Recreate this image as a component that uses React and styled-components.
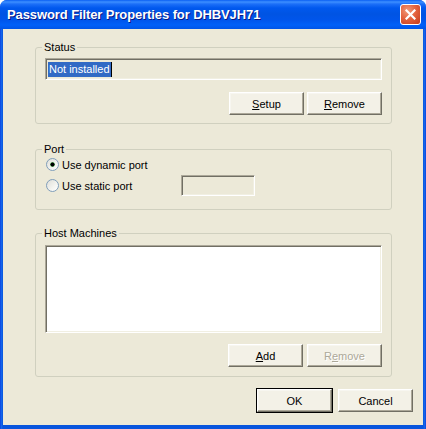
import styled, { createGlobalStyle } from "styled-components";

const GlobalStyle = createGlobalStyle`
  html, body {
    margin: 0;
    padding: 0;
    background: #ffffff;
  }
  body {
    font-family: "Liberation Sans", Arial, sans-serif;
    font-size: 11px;
  }
`;

const Window = styled.div`
  width: 426px;
  height: 429px;
  box-sizing: border-box;
  display: flex;
  flex-direction: column;
  border-radius: 7px 7px 0 0;
  background: linear-gradient(to right, #0831d9 0, #166aee 1px, #0855dd 3px, #0855dd 423px, #166aee 425px, #0831d9 426px);
  overflow: hidden;
`;

const TitleBar = styled.div`
  height: 29px;
  flex-shrink: 0;
  display: flex;
  align-items: center;
  justify-content: space-between;
  padding: 0 5px 0 7px;
  box-sizing: border-box;
  background: linear-gradient(
    to bottom,
    #0a5ff3 0px,
    #3d8fff 2px,
    #1c6ff8 4px,
    #0058ee 8px,
    #0054e3 14px,
    #0055eb 20px,
    #0060f8 25px,
    #0054e6 29px
  );
`;

const Title = styled.span`
  color: #ffffff;
  font-family: "Liberation Sans", Arial, sans-serif;
  font-weight: bold;
  font-size: 13px;
  letter-spacing: -0.1px;
  text-shadow: 1px 1px 0 #0a1883;
`;

const CloseButton = styled.div`
  width: 21px;
  height: 21px;
  box-sizing: border-box;
  border: 1px solid #ffffff;
  border-radius: 3px;
  background: radial-gradient(circle at 35% 30%, #f09a7a 0%, #e4643f 45%, #c4391a 100%);
  display: flex;
  align-items: center;
  justify-content: center;
`;

const Client = styled.div`
  flex: 1;
  margin: 0 3px 4px 3px;
  background: #ece9d8;
  padding: 11px 10px 0 32px;
  display: flex;
  flex-direction: column;
  color: #000000;
`;

const GroupBox = styled.fieldset`
  margin: ${(p) => p.$top || 0}px 21px 0 0;
  padding: ${(p) => p.$pad};
  min-width: 0;
  border: 1px solid #d0d0bf;
  border-radius: 3px;
  display: flex;
  flex-direction: column;
`;

const Legend = styled.legend`
  padding: 0 2px;
  margin-left: -3px;
  line-height: 14px;
  font-size: 11px;
`;

const Sunken = styled.div`
  box-sizing: border-box;
  height: ${(p) => p.$h}px;
  width: ${(p) => (p.$w ? `${p.$w}px` : "auto")};
  background: ${(p) => p.$bg};
  border-top: 1px solid #aca899;
  border-left: 1px solid #aca899;
  border-bottom: 1px solid #ffffff;
  border-right: 1px solid #ffffff;
  box-shadow: inset 1px 1px 0 #716f64, inset -1px -1px 0 #f1efe2;
`;

const StatusField = styled(Sunken)`
  display: flex;
  align-items: center;
  padding-left: 2px;
`;

const Selected = styled.span`
  background: #316ac5;
  color: #ffffff;
  line-height: 15px;
  padding: 0 1px;
`;

const Caret = styled.span`
  width: 1px;
  height: 15px;
  background: #000000;
`;

const ButtonRow = styled.div`
  display: flex;
  justify-content: flex-end;
  gap: ${(p) => p.$gap || 3}px;
  margin-top: ${(p) => p.$top || 0}px;
`;

const Button = styled.button`
  width: 75px;
  height: 23px;
  box-sizing: border-box;
  padding: 0;
  font-family: "Liberation Sans", Arial, sans-serif;
  font-size: 11px;
  color: ${(p) => (p.disabled ? "#aca899" : "#000000")};
  text-shadow: ${(p) => (p.disabled ? "1px 1px 0 #ffffff" : "none")};
  background: #f3f1e7;
  border-top: 1px solid #ffffff;
  border-left: 1px solid #ffffff;
  border-right: 1px solid #716f64;
  border-bottom: 1px solid #716f64;
  box-shadow: inset -1px -1px 0 #aca899, inset 1px 1px 0 #f7f6f0;
  outline: ${(p) => (p.$default ? "1px solid #000000" : "none")};
  outline-offset: 0;
  cursor: default;

  u {
    text-decoration: underline;
    text-underline-offset: 1px;
  }
`;

const RadioRow = styled.div`
  display: flex;
  align-items: center;
  height: ${(p) => p.$h}px;
  margin-top: ${(p) => p.$top || 0}px;
`;

const RadioLabel = styled.label`
  display: flex;
  align-items: center;
  gap: 3px;
  width: ${(p) => p.$w || "auto"};
  padding-left: 1px;
  box-sizing: border-box;
`;

const Footer = styled.div`
  display: flex;
  justify-content: flex-end;
  gap: 6px;
  margin-top: 12px;
`;

function Radio({ checked }) {
  return (
    <svg width="13" height="13" viewBox="0 0 13 13">
      <defs>
        <linearGradient id={checked ? "rg1" : "rg2"} x1="0" y1="0" x2="1" y2="1">
          <stop offset="0" stopColor="#dcdcd6" />
          <stop offset="0.6" stopColor="#f4f4f0" />
          <stop offset="1" stopColor="#ffffff" />
        </linearGradient>
      </defs>
      <circle cx="6.5" cy="6.5" r="6" fill={`url(#${checked ? "rg1" : "rg2"})`} stroke="#7f9db9" strokeWidth="1" />
      {checked && <circle cx="6.5" cy="6.5" r="2.2" fill="#21a121" />}
      {checked && <circle cx="6.5" cy="6.5" r="2" fill="#000000" />}
    </svg>
  );
}

function CloseIcon() {
  return (
    <svg width="11" height="11" viewBox="0 0 11 11">
      <path d="M1.5 1.5 L9.5 9.5 M9.5 1.5 L1.5 9.5" stroke="#ffffff" strokeWidth="2.2" strokeLinecap="square" />
    </svg>
  );
}

export default function App() {
  return (
    <>
      <GlobalStyle />
      <Window>
        <TitleBar>
          <Title>Password Filter Properties for DHBVJH71</Title>
          <CloseButton>
            <CloseIcon />
          </CloseButton>
        </TitleBar>
        <Client>
          <GroupBox $pad="4px 9px 8px 9px">
            <Legend>Status</Legend>
            <StatusField $h={22} $bg="#ece9d8">
              <Selected>Not installed</Selected>
              <Caret />
            </StatusField>
            <ButtonRow $top={12}>
              <Button>
                <u>S</u>etup
              </Button>
              <Button>
                <u>R</u>emove
              </Button>
            </ButtonRow>
          </GroupBox>

          <GroupBox $top={18} $pad="2px 9px 13px 9px">
            <Legend>Port</Legend>
            <RadioRow $h={13}>
              <RadioLabel>
                <Radio checked />
                Use dynamic port
              </RadioLabel>
            </RadioRow>
            <RadioRow $h={21} $top={4}>
              <RadioLabel $w="136px">
                <Radio />
                Use static port
              </RadioLabel>
              <Sunken $h={21} $w={74} $bg="#ece9d8" />
            </RadioRow>
          </GroupBox>

          <GroupBox $top={16} $pad="5px 9px 9px 9px">
            <Legend>Host Machines</Legend>
            <Sunken $h={88} $bg="#ffffff" />
            <ButtonRow $top={11} $gap={4}>
              <Button>
                <u>A</u>dd
              </Button>
              <Button disabled>
                R<u>e</u>move
              </Button>
            </ButtonRow>
          </GroupBox>

          <Footer>
            <Button $default>OK</Button>
            <Button>Cancel</Button>
          </Footer>
        </Client>
      </Window>
    </>
  );
}
